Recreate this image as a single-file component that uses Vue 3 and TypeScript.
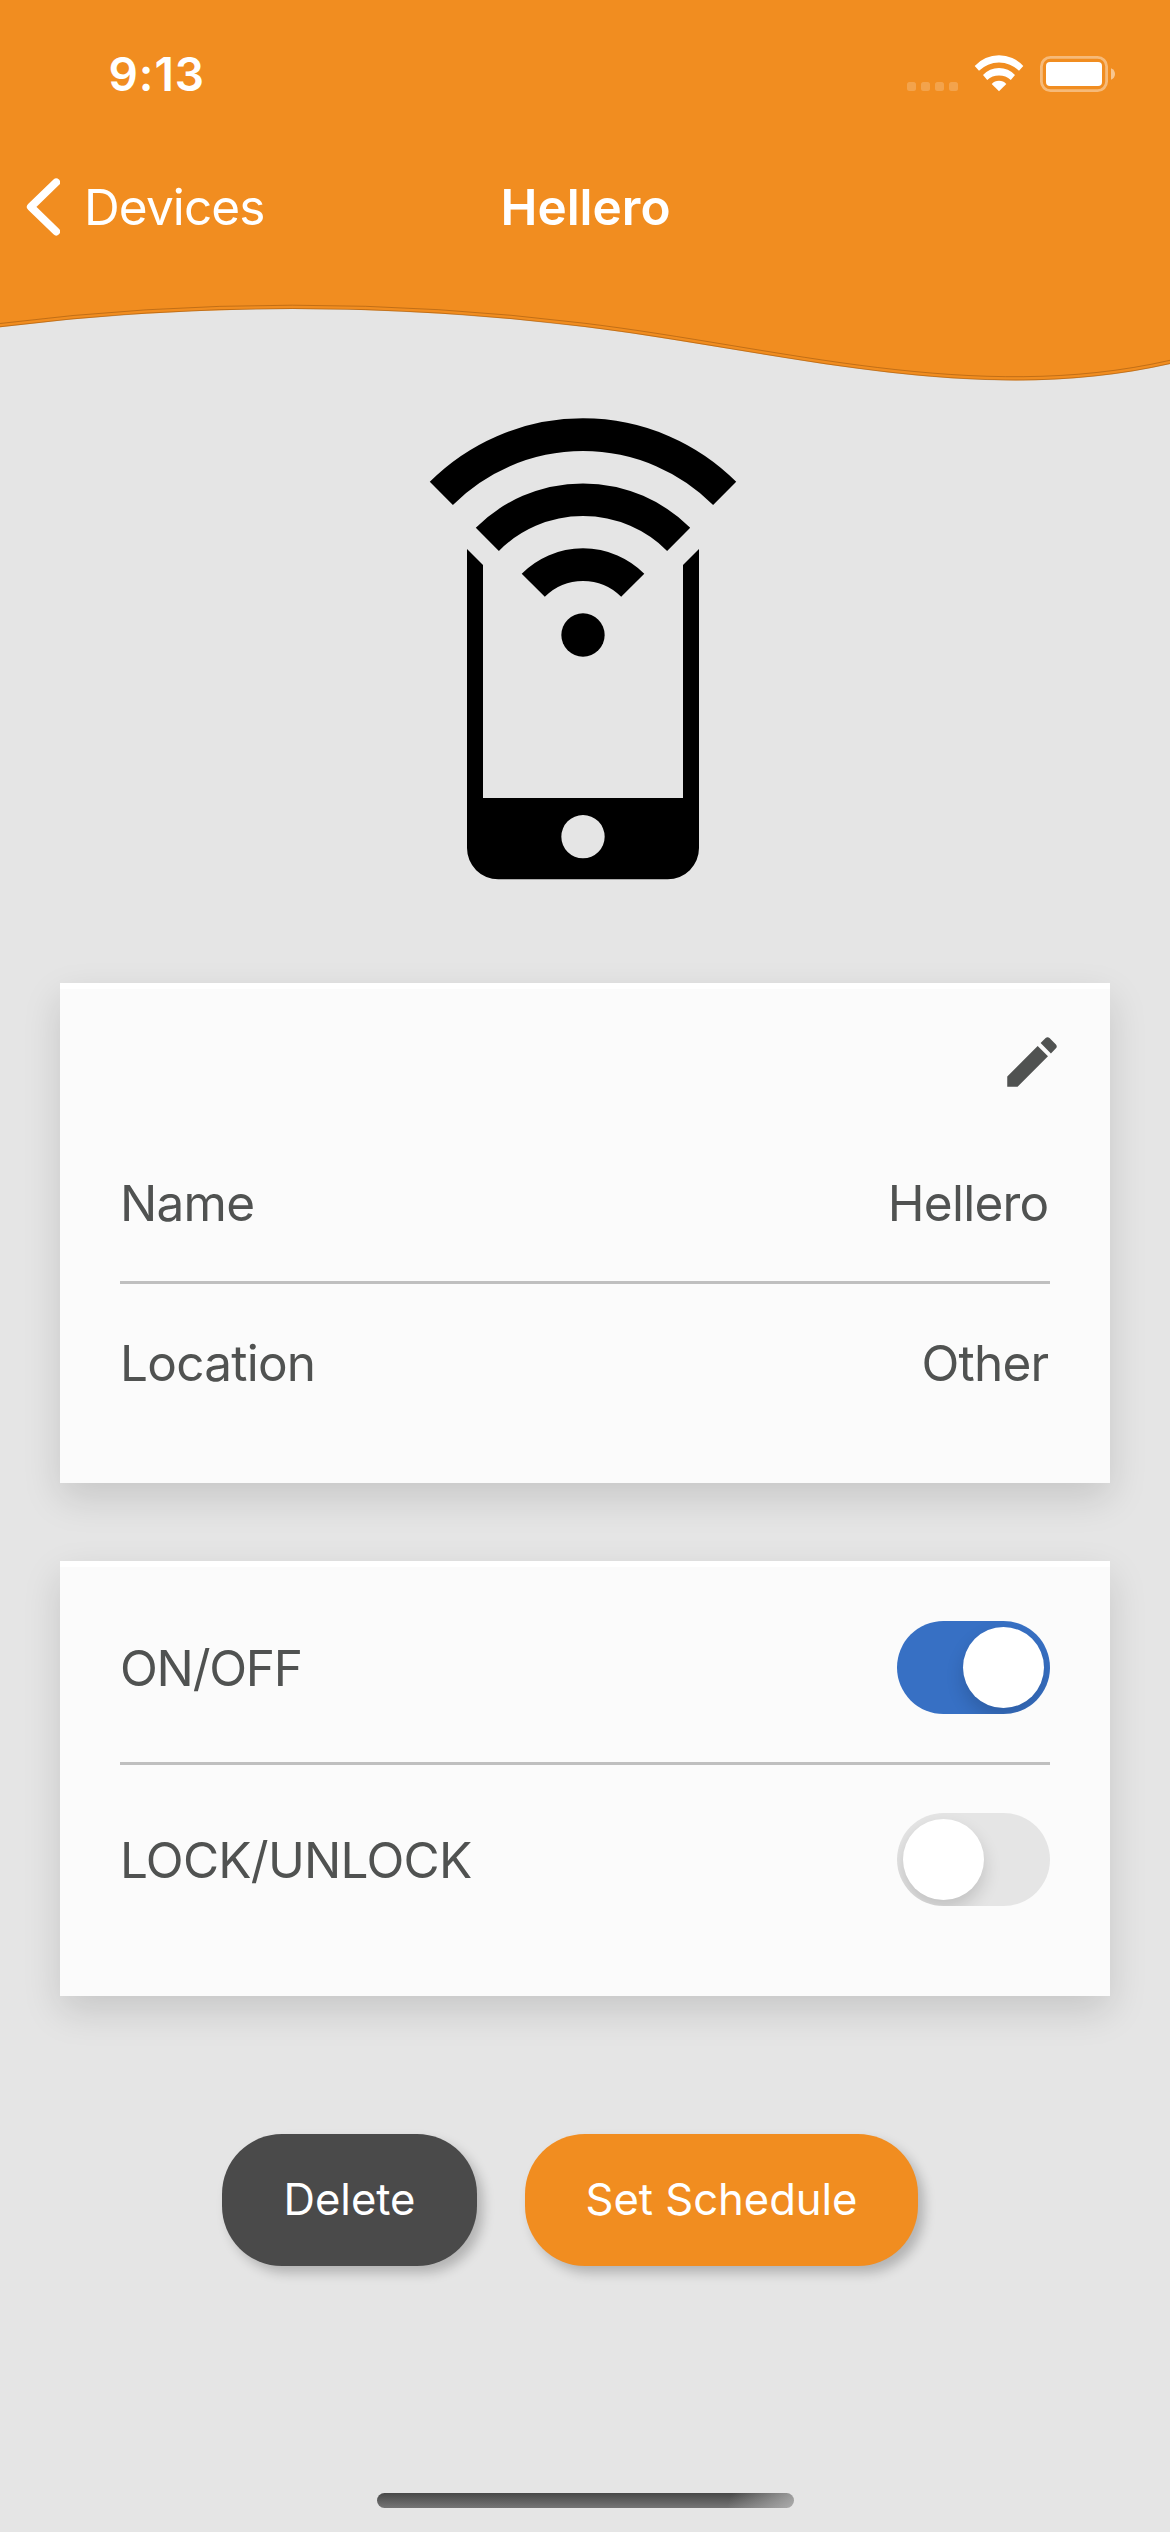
<script setup lang="ts">
import { reactive } from 'vue'

interface Detail {
  label: string
  value: string
}

interface Control {
  label: string
  on: boolean
  tight?: boolean
}

const device = { name: 'Hellero', location: 'Other' }

const details: Detail[] = [
  { label: 'Name', value: device.name },
  { label: 'Location', value: device.location },
]

const controls = reactive<Control[]>([
  { label: 'ON/OFF', on: true, tight: true },
  { label: 'LOCK/UNLOCK', on: false },
])

const waveEdge = 'M0 327.2Q292.5 290.7 585 327C780 351 975 408.5 1170 364'
</script>

<template>
  <div class="screen">
    <header class="header">
      <svg class="wave" viewBox="0 0 1170 400" aria-hidden="true">
        <path :d="waveEdge + 'V0H0Z'" fill="#f18d20" />
        <path :d="waveEdge" class="wave-line" transform="translate(0 -3.7)" />
        <path :d="waveEdge" class="wave-line" transform="translate(0 -.4)" />
      </svg>
      <div class="status-bar">
        <span class="time">9:13</span>
        <svg class="status-icons" viewBox="907 54 208 40" aria-hidden="true">
          <g fill="#fff" fill-opacity=".2">
            <rect x="907" y="82" width="9" height="9" rx="2.5" />
            <rect x="921" y="82" width="9" height="9" rx="2.5" />
            <rect x="935" y="82" width="9" height="9" rx="2.5" />
            <rect x="949" y="82" width="9" height="9" rx="2.5" />
          </g>
          <g fill="#fff">
            <path d="M974.7 65.9A32.9 32.9 0 0 1 1023.3 65.9L1019 70.8A28.3 28.3 0 0 0 979 70.8Z" />
            <path d="M983 75.1A21.4 21.4 0 0 1 1015 75.1L1010.8 79.9A17.8 17.8 0 0 0 987.2 79.9Z" />
            <path d="M991.7 84A10 10 0 0 1 1006.3 84L999 91.3Z" />
          </g>
          <rect x="1041.4" y="57.4" width="65.2" height="33.2" rx="9" fill="none" stroke="#fff" stroke-opacity=".4" stroke-width="2.8" />
          <rect x="1046" y="62" width="56" height="24" rx="4" fill="#fff" />
          <path d="M1111 68.2Q1115 70 1115 74T1111 79.8Z" fill="#fff" fill-opacity=".5" />
        </svg>
      </div>
      <nav class="nav">
        <a class="back">
          <svg class="chevron" viewBox="0 0 36 60" aria-hidden="true">
            <path d="M32.2 5.3L6.8 29.9L32.2 54.5" fill="none" stroke="#fff" stroke-width="7.8" stroke-linecap="round" stroke-linejoin="round" />
          </svg>
          <span>Devices</span>
        </a>
        <h1 class="title">{{ device.name }}</h1>
        <span></span>
      </nav>
    </header>

    <main>
      <svg class="device-icon" viewBox="0 0 1110 1500" aria-hidden="true">
        <g fill="none" stroke="#000" stroke-width="98">
          <path d="M124 280A601 601 0 0 1 974 280" />
          <path d="M262 418A406 406 0 0 1 836 418" />
          <path d="M399.8 555.8A211 211 0 0 1 698.2 555.8" />
        </g>
        <circle cx="549" cy="705" r="65" />
        <path fill-rule="evenodd" d="M201 447L249 495V1194H849V495L897 447V1344A94 94 0 0 1 803 1438H295A94 94 0 0 1 201 1344ZM549 1245A65 65 0 1 0 549 1375A65 65 0 1 0 549 1245Z" />
      </svg>

      <section class="card details">
        <div class="edit-row">
          <svg class="pencil" viewBox="0 0 24 24" role="img" aria-label="Edit">
            <path fill="#505251" d="M3 17.25V21h3.75L17.81 9.94l-3.75-3.75L3 17.25zM20.71 7.04c.39-.39.39-1.02 0-1.41l-2.34-2.34c-.39-.39-1.02-.39-1.41 0l-1.83 1.83 3.75 3.75 1.83-1.83z" />
          </svg>
        </div>
        <div v-for="d in details" :key="d.label" class="row">
          <span>{{ d.label }}</span>
          <span class="value">{{ d.value }}</span>
        </div>
      </section>

      <section class="card controls">
        <div v-for="c in controls" :key="c.label" class="row">
          <span :class="{ tight: c.tight }">{{ c.label }}</span>
          <button
            class="toggle"
            :class="{ on: c.on }"
            role="switch"
            :aria-checked="c.on"
            :aria-label="c.label"
            @click="c.on = !c.on"
          >
            <span class="thumb"></span>
          </button>
        </div>
      </section>

      <div class="actions">
        <button class="btn delete">Delete</button>
        <button class="btn schedule">Set Schedule</button>
      </div>
    </main>

    <div class="home-indicator"></div>
  </div>
</template>

<style>
body {
  margin: 0;
  background: #e5e5e5;
}
</style>

<style scoped>
.screen {
  display: flex;
  flex-direction: column;
  width: 1170px;
  height: 2532px;
  overflow: hidden;
  background: #e5e5e5;
  color: #505251;
  font-family: Inter, 'Liberation Sans', sans-serif;
  font-size: 49.5px;
  line-height: 60px;
  letter-spacing: -0.75px;
}

.header {
  position: relative;
  flex: none;
  height: 400px;
  color: #fff;
}

.wave {
  position: absolute;
  inset: 0;
  width: 1170px;
  height: 400px;
}

.wave-line {
  fill: none;
  stroke: #7a4208;
  stroke-opacity: 0.5;
  stroke-width: 0.8;
}

.status-bar {
  position: relative;
  display: flex;
  align-items: center;
  justify-content: space-between;
  box-sizing: border-box;
  height: 141px;
  padding: 7px 55px 0 108.5px;
}

.time {
  font-size: 46px;
  font-weight: 600;
  letter-spacing: 0.9px;
}

.status-icons {
  width: 208px;
  height: 40px;
}

.nav {
  position: relative;
  display: grid;
  grid-template-columns: 1fr auto 1fr;
  align-items: center;
  height: 132px;
}

.back {
  display: flex;
  align-items: center;
  gap: 24px;
  padding-left: 24px;
  letter-spacing: -0.87px;
}

.chevron {
  width: 36px;
  height: 60px;
}

.title {
  margin: 0;
  padding-left: 1px;
  font-size: 49.5px;
  font-weight: 600;
  letter-spacing: 0;
}

main {
  display: flex;
  flex-direction: column;
}

.device-icon {
  align-self: center;
  width: 370px;
  height: 500px;
}

.card {
  box-sizing: border-box;
  margin: 0 60px;
  padding: 0 60px;
  border-top: 6px solid #fff;
  background: #fbfbfb;
  box-shadow: 0 15px 36px rgba(0, 0, 0, 0.135);
}

.details {
  height: 500px;
  margin-top: 83px;
}

.edit-row {
  display: flex;
  justify-content: flex-end;
  align-items: center;
  box-sizing: border-box;
  height: 136px;
  padding-top: 9px;
}

.pencil {
  width: 66px;
  height: 66px;
  margin-right: -15px;
}

.row {
  display: flex;
  align-items: center;
  justify-content: space-between;
}

.row + .row {
  border-top: 3px solid #bfbfbf;
}

.details .row {
  height: 156px;
}

.details .row + .row {
  height: 158px;
}

.value {
  padding-right: 1.5px;
}

.controls {
  height: 435px;
  margin-top: 78px;
  padding-top: 6px;
}

.controls .row {
  height: 189px;
}

.tight {
  letter-spacing: -1.25px;
}

.toggle {
  display: flex;
  box-sizing: border-box;
  width: 153px;
  height: 93px;
  padding: 6px;
  border: 0;
  border-radius: 47px;
  overflow: hidden;
  background: #e5e5e5;
}

.toggle.on {
  justify-content: flex-end;
  background: #3770c4;
}

.thumb {
  width: 81px;
  height: 81px;
  border-radius: 50%;
  background: #fff;
  box-shadow: 0 9px 18px rgba(0, 0, 0, 0.16);
}

.actions {
  display: flex;
  gap: 48px;
  margin: 138px 0 0 222px;
}

.btn {
  height: 132px;
  padding: 0;
  border: 0;
  border-radius: 60px;
  color: #fff;
  font: inherit;
  font-size: 43.6px;
  letter-spacing: -0.05px;
  box-shadow: 6px 7px 12px rgba(0, 0, 0, 0.22);
}

.delete {
  width: 255px;
  background: #4a4a4a;
}

.schedule {
  width: 393px;
  background: #f18d20;
}

.home-indicator {
  align-self: center;
  width: 417px;
  height: 15px;
  margin: auto 0 24px;
  border-radius: 8px;
  background:
    linear-gradient(110deg, transparent 84%, rgba(190, 190, 190, 0.75) 100%),
    linear-gradient(#484848, #757575);
}
</style>
